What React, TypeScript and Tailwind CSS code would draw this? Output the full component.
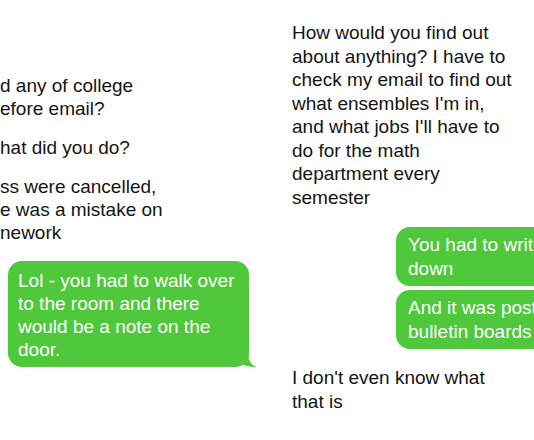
import React from "react";

const green = "bg-[#4fc83b]";

function Lines({ lines, className = "" }: { lines: string[]; className?: string }) {
  return (
    <div className={className}>
      {lines.map((line, i) => (
        <div key={i} className="whitespace-nowrap">
          {line}
        </div>
      ))}
    </div>
  );
}

export default function App() {
  return (
    <div
      className="flex w-[534px] h-[440px] overflow-hidden bg-white text-[19px] text-[#141414]"
      style={{ fontFamily: '"Liberation Sans", Arial, sans-serif' }}
    >
      {/* Left conversation (cut off at the left edge) */}
      <div className="w-[270px] shrink-0 pt-[74px] leading-[23px]">
        <Lines lines={["d any of college", "efore email?"]} />
        <Lines className="mt-[16px]" lines={["hat did you do?"]} />
        <Lines
          className="mt-[16px]"
          lines={["ss were cancelled,", "e was a mistake on", "nework"]}
        />
        <div className="relative mt-[17px] ml-[8px] w-[241px]">
          <div className={`${green} rounded-[14px] px-[10px] pt-[8px] pb-[6px] text-white`}>
            <Lines
              lines={[
                "Lol - you had to walk over",
                "to the room and there",
                "would be a note on the",
                "door.",
              ]}
            />
          </div>
          <svg
            className="absolute right-[-7px] bottom-0"
            width="16"
            height="14"
            viewBox="0 0 16 14"
          >
            <path d="M0 0 L8 0 Q8 10 16 14 Q6 14 0 10 Z" fill="#4fc83b" />
          </svg>
        </div>
      </div>

      {/* Right conversation (cut off at the right edge) */}
      <div className="flex-1 pl-[22px] pt-[21px] leading-[23.5px]">
        <Lines
          lines={[
            "How would you find out",
            "about anything? I have to",
            "check my email to find out",
            "what ensembles I'm in,",
            "and what jobs I'll have to",
            "do for the math",
            "department every",
            "semester",
          ]}
        />
        <div className="mt-[18px] ml-[104px] flex flex-col gap-[4px] text-white">
          <div className={`${green} w-[200px] rounded-[14px] px-[12px] py-[6px]`}>
            <Lines lines={["You had to write it", "down"]} />
          </div>
          <div className={`${green} w-[200px] rounded-[14px] px-[12px] py-[6px]`}>
            <Lines lines={["And it was posted on", "bulletin boards"]} />
          </div>
        </div>
        <Lines className="mt-[17px]" lines={["I don't even know what", "that is"]} />
      </div>
    </div>
  );
}
